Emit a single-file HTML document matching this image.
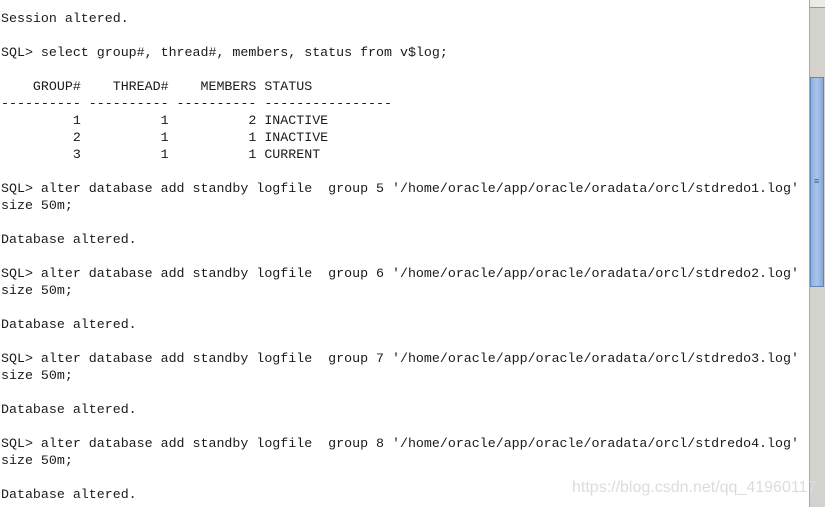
<!DOCTYPE html>
<html><head><style>
html,body{margin:0;padding:0;background:#fff;width:825px;height:507px;overflow:hidden;position:relative}
pre{margin:0;position:absolute;left:1px;top:10px;font-family:"Liberation Mono",monospace;font-size:13.3px;line-height:17px;color:#1a1a1a;white-space:pre}
.sb{position:absolute;left:809px;top:0;width:15px;height:507px;background:#d4d2cf;border-left:1px solid #aaa8a4;border-right:1px solid #b0aeaa}
.arr{position:absolute;left:0;top:0;width:15px;height:7px;background:#eceae7;border-bottom:1px solid #999}
.th{position:absolute;left:0;top:77px;width:14px;height:210px;background:linear-gradient(90deg,#8fb0dc,#a9c4ea 50%,#86a8d6);border:1px solid #5f86bf;box-sizing:border-box}
.th span{position:absolute;left:3px;top:98px;font:9px "Liberation Sans",sans-serif;color:#3a5f94}
.wm{position:absolute;left:572px;top:479px;font-family:"Liberation Sans",sans-serif;font-size:16px;color:#dcdcdc;z-index:5}
</style></head><body>
<pre>Session altered.

SQL&gt; select group#, thread#, members, status from v$log;

    GROUP#    THREAD#    MEMBERS STATUS
---------- ---------- ---------- ----------------
         1          1          2 INACTIVE
         2          1          1 INACTIVE
         3          1          1 CURRENT

SQL&gt; alter database add standby logfile  group 5 '/home/oracle/app/oracle/oradata/orcl/stdredo1.log'
size 50m;

Database altered.

SQL&gt; alter database add standby logfile  group 6 '/home/oracle/app/oracle/oradata/orcl/stdredo2.log'
size 50m;

Database altered.

SQL&gt; alter database add standby logfile  group 7 '/home/oracle/app/oracle/oradata/orcl/stdredo3.log'
size 50m;

Database altered.

SQL&gt; alter database add standby logfile  group 8 '/home/oracle/app/oracle/oradata/orcl/stdredo4.log'
size 50m;

Database altered.</pre>
<div class="sb"><div class="arr"></div><div class="th"><span>≡</span></div></div>
<div class="wm">https://blog.csdn.net/qq_41960117</div>
</body></html>
